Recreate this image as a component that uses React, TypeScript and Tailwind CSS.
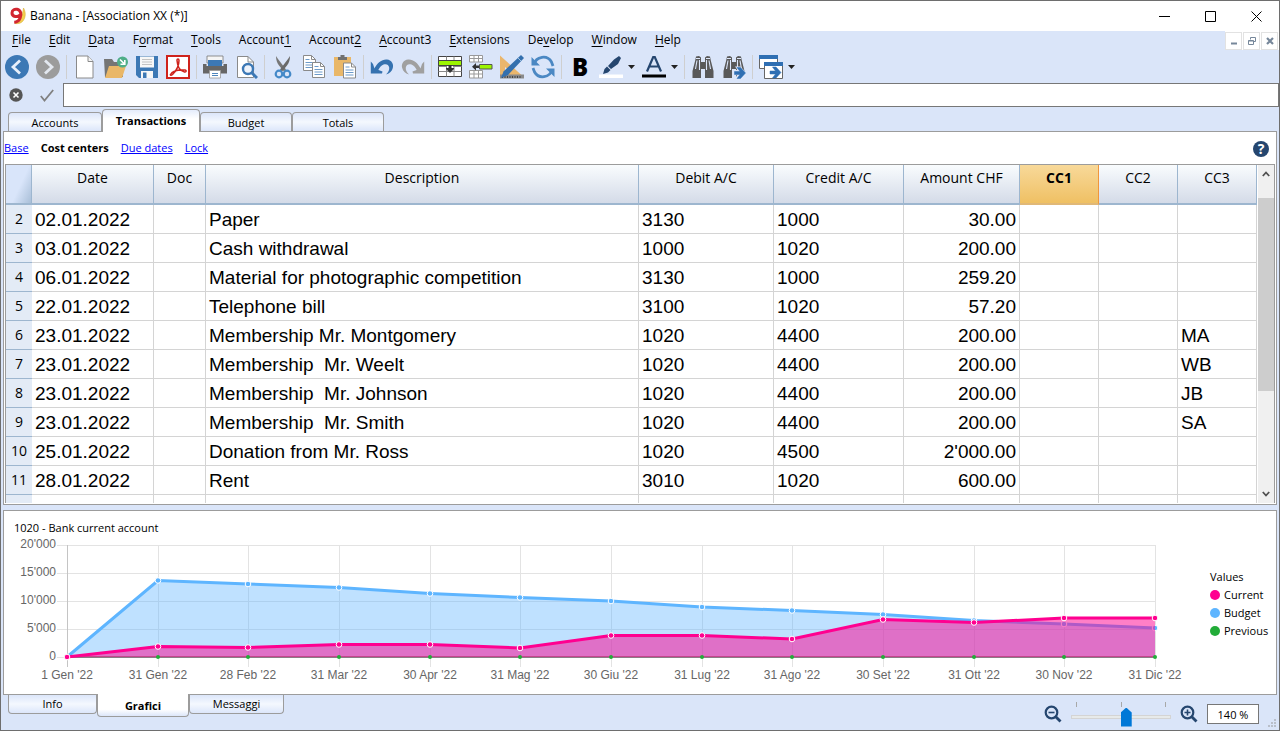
import React from "react";

type Row = { n: number; date: string; desc: string; debit: string; credit: string; amount: string; cc3?: string };

const rows: Row[] = [
  { n: 2, date: "02.01.2022", desc: "Paper", debit: "3130", credit: "1000", amount: "30.00" },
  { n: 3, date: "03.01.2022", desc: "Cash withdrawal", debit: "1000", credit: "1020", amount: "200.00" },
  { n: 4, date: "06.01.2022", desc: "Material for photographic competition", debit: "3130", credit: "1000", amount: "259.20" },
  { n: 5, date: "22.01.2022", desc: "Telephone bill", debit: "3100", credit: "1020", amount: "57.20" },
  { n: 6, date: "23.01.2022", desc: "Membership Mr. Montgomery", debit: "1020", credit: "4400", amount: "200.00", cc3: "MA" },
  { n: 7, date: "23.01.2022", desc: "Membership  Mr. Weelt", debit: "1020", credit: "4400", amount: "200.00", cc3: "WB" },
  { n: 8, date: "23.01.2022", desc: "Membership  Mr. Johnson", debit: "1020", credit: "4400", amount: "200.00", cc3: "JB" },
  { n: 9, date: "23.01.2022", desc: "Membership  Mr. Smith", debit: "1020", credit: "4400", amount: "200.00", cc3: "SA" },
  { n: 10, date: "25.01.2022", desc: "Donation from Mr. Ross", debit: "1020", credit: "4500", amount: "2'000.00" },
  { n: 11, date: "28.01.2022", desc: "Rent", debit: "3010", credit: "1020", amount: "600.00" },
];

const menus: [string, string, string][] = [
  ["", "F", "ile"], ["", "E", "dit"], ["", "D", "ata"], ["F", "o", "rmat"], ["", "T", "ools"],
  ["Account", "1", ""], ["Account", "2", ""], ["", "A", "ccount3"], ["", "E", "xtensions"],
  ["De", "v", "elop"], ["", "W", "indow"], ["", "H", "elp"],
];

function Icon({ children }: { children: React.ReactNode }) {
  return <svg viewBox="0 0 24 24" className="block size-6" aria-hidden="true">{children}</svg>;
}

function Tool({ label, children, menu }: { label: string; children: React.ReactNode; menu?: boolean }) {
  return (
    <button type="button" aria-label={label} className="flex items-center gap-[5px]">
      <Icon>{children}</Icon>
      {menu && (
        <svg viewBox="0 0 7 4" className="h-1 w-[7px]" aria-hidden="true"><path d="M0 0h7L3.500 4z" fill="#222" /></svg>
      )}
    </button>
  );
}

function Group({ children }: { children: React.ReactNode }) {
  return <div className="flex items-center gap-[7px]">{children}</div>;
}

function Sep() {
  return <div className="h-6 w-px bg-[#cfcfcf]" />;
}

const sheet = (x: number, y: number) => (
  <g transform={`translate(${x} ${y})`}>
    <path d="M0.5 0.5h8l4 4v11h-12z" fill="#fff" stroke="#8a8a8a" />
    <path d="M8.5 0.5v4h4" fill="none" stroke="#8a8a8a" />
    <path d="M2.5 4.5h4M2.5 7.5h8M2.5 10h8M2.5 12.5h8" stroke="#6c9ac9" />
  </g>
);

const binoculars = (
  <g fill="#595959">
    <path d="M5 1.500 8 1l2 1.500V7h4V2.500L16 1l3 .5.8 4L22.500 16v7h-8.500v-9h-4v9H1.500v-7L4.200 5.500z" />
    <path d="M6 5.500 4.500 14M8.500 5v10M15.500 5v10M18 5.500 19.500 14" stroke="#dce6fa" fill="none" strokeWidth="1.100" />
    <path d="M5 3.500h4M15 3.500h4" stroke="#dce6fa" fill="none" />
  </g>
);

const arrowRight = <path d="M0 4h5.500L2.500 0H6l5 5.500L6 11H2.500l3-4H0z" fill="#2f6fb3" stroke="#2f6fb3" strokeWidth="0.500" />;

function Toolbar() {
  return (
    <div className="flex h-8 shrink-0 items-center gap-1.5 pl-1 pt-0.5">
      <Group>
        <Tool label="Back"><circle cx="12" cy="12" r="12" fill="#3c78b5" /><path d="M15 5.500 8 12l7 6.500" fill="none" stroke="#e8f0fb" strokeWidth="2.800" /></Tool>
        <Tool label="Forward"><circle cx="12" cy="12" r="12" fill="#9c9c9c" /><path d="M9 5.500 16 12l-7 6.500" fill="none" stroke="#e3e8f0" strokeWidth="2.800" /></Tool>
      </Group>
      <Sep />
      <Group>
        <Tool label="New"><path d="M3.500 1h11.500l5 5.500V23H3.500z" fill="#fff" stroke="#8a8a8a" /><path d="M15 1v5.500h5" fill="#f3f3f3" stroke="#8a8a8a" /></Tool>
        <Tool label="Open">
          <path d="M0 4h8l2 3h9v15H1z" fill="#757575" /><path d="M5 11h17l-4 12H1z" fill="#e9b768" />
          <circle cx="18.500" cy="7" r="5.500" fill="#4fae88" /><path d="m16 4.500 4.500 4.500M20.800 5v4.300h-4.300" fill="none" stroke="#fff" strokeWidth="1.600" />
        </Tool>
        <Tool label="Save">
          <path d="M1 1h22v22H4l-3-3z" fill="#3c78b5" /><path d="M5 1.500h14v11H5z" fill="#f7f7f7" /><path d="M7 4.500h10M7 7h10M7 9.500h10" stroke="#c3c3c3" />
          <path d="M6 16h12v7H6z" fill="#f7f7f7" /><path d="M8 17.500h3.500V23H8z" fill="#3c78b5" />
        </Tool>
        <Tool label="PDF">
          <path d="M1 1h22v22H1z" fill="#fff" stroke="#cf231c" strokeWidth="2" />
          <path d="M4.500 19.500c2-4 7-5 14.500-4.500 1.800.3 1.500 2.200-.5 1.900C14 16 11.500 12 11 5.500c0-2.200 2-2 2 0C13 10 10 16 6.500 19.500c-1.200 1-2.600.8-2-0z" fill="none" stroke="#cf231c" strokeWidth="1.500" />
        </Tool>
      </Group>
      <Sep />
      <Group>
        <Tool label="Print">
          <path d="M4 1h16v7H4z" fill="#f5f5f5" stroke="#777" strokeWidth=".8" /><path d="M5 5h14v6H5z" fill="#3c78b5" />
          <path d="M0 9h3.500v2h17V9H24v9.500H0z" fill="#666" /><path d="M6.500 15.500h11V23h-11z" fill="#fff" stroke="#999" strokeWidth=".8" /><path d="M9 18.500h6M9 20.500h6" stroke="#4f86bd" />
        </Tool>
        <Tool label="Print preview">
          <path d="M3.500 1.500h10.500l5.500 5.500v15.500h-16z" fill="#fff" stroke="#8a8a8a" /><path d="M14 1.500V7h5.500" fill="none" stroke="#8a8a8a" />
          <circle cx="14" cy="14" r="5" fill="#eef3fb" stroke="#3c78b5" strokeWidth="2.400" /><path d="m17.500 17.500 5.500 5.500" stroke="#3c78b5" strokeWidth="3" />
        </Tool>
      </Group>
      <Sep />
      <Group>
        <Tool label="Cut">
          <path d="M5 1c0 4 1 7 3 9.500l5 6 2-2L7 4z" fill="#777" /><path d="M19 1c0 4-1 7-3 9.500l-5 6-2-2L17 4z" fill="#6a6a6a" />
          <circle cx="8" cy="19" r="3.300" fill="none" stroke="#4489c8" strokeWidth="2.200" /><circle cx="16" cy="19" r="3.300" fill="none" stroke="#4489c8" strokeWidth="2.200" />
        </Tool>
        <Tool label="Copy">{sheet(1, 0)}{sheet(10, 7)}</Tool>
        <Tool label="Paste"><path d="M1 2h17v19H1z" fill="#e9b768" /><path d="M5 5V2h2.500V0h4v2H14v3z" fill="#707070" />{sheet(10, 7.500)}</Tool>
      </Group>
      <Sep />
      <Group>
        <Tool label="Undo"><path d="M4 14C7.500 7.500 12 4 17 4.500c4.500.5 7 4.500 5.800 8.500-.8 3-3 5.500-6.800 6.500 2.500-2.500 3.500-4.500 3.200-7-.4-3-3-4-5.700-3-2.500 1-4 3-5.500 6z" fill="#3572b0" /><path d="M.8 6.500 3 9l1.500 4.500 8 3L12 18.500H.8z" fill="#3572b0" /></Tool>
        <Tool label="Redo"><path d="M20 14C16.500 7.500 12 4 7 4.500 2.500 5 0 9 1.200 13c.8 3 3 5.500 6.800 6.500-2.500-2.500-3.500-4.500-3.200-7 .4-3 3-4 5.700-3 2.500 1 4 3 5.500 6z" fill="#a0a0a0" /><path d="M23.200 6.500 21 9l-1.500 4.500-8 3 .5 2h11.200z" fill="#a0a0a0" /></Tool>
      </Group>
      <Sep />
      <Group>
        <Tool label="Insert row">
          <path d="M.5 1.500h23v20H.5z" fill="#fff" stroke="#444" /><path d="M8.500 1.500v20M16 1.500v20M.5 11.500h23M.5 16.500h23" stroke="#888" />
          <path d="M.5 5.500h23v5H.5z" fill="#9cf500" stroke="#444" /><path d="M12 11v2" stroke="#fff" strokeWidth="6" /><path d="M10.500 10h3v3h2.500v1L12 18l-4-4v-1h2.500z" fill="#333" />
        </Tool>
        <Tool label="Add row">
          <path d="M.5 .5h13v6.500H.5zM.5 15.500h13v7.500H.5zM5 .5v6.500M9.500 .5v6.500M5 15.500v7.500M9.500 15.500v7.500M.5 3.500h13M.5 19h13" fill="#fff" stroke="#999" />
          <path d="M10.500 9.500h12.500v4.500H10.500z" fill="#9cf500" stroke="#555" /><path d="M3 11.700 7 8v2.500h3v2.500H7v2.500z" fill="#333" />
        </Tool>
        <Tool label="Design">
          <path d="M0 .5v20h22z" fill="#eab66c" /><path d="M5 12v5h6z" fill="#dce6fa" /><path d="M0 19.500h24v4H0z" fill="#8a8a8a" /><path d="M2 22h20" stroke="#444" strokeDasharray="1 1.500" strokeWidth="2" />
          <path d="M21 0 24 3 8 20l-7 3 2.500-6.500z" fill="#3470ae" /><path d="m18 3 3 3" stroke="#bcd4ec" strokeWidth=".8" />
        </Tool>
        <Tool label="Refresh">
          <path d="M3 9.500A9.500 9.500 0 0 1 20.500 7l1.500 4M21 14.500A9.500 9.500 0 0 1 3.500 17L2 13" fill="none" stroke="#4b88c3" strokeWidth="2.800" /><path d="M.5 2v8.500H9zM23.500 22v-8.500H15z" fill="#4b88c3" />
        </Tool>
      </Group>
      <Sep />
      <Group>
        <button type="button" aria-label="Bold" className="flex h-6 w-6 items-center justify-center font-['Open_Sans',sans-serif] text-2xl font-extrabold leading-6 text-black">B</button>
        <Tool label="Highlight" menu>
          <path d="M15 4.500 20 1l2 2-3 6-7 5-3-3zM8 11.500l3.500 3.500-2.500 2.500L4 19l1.500-5z" fill="#25466f" /><path d="M0 19.500h24v3.500H0z" fill="#fff" />
        </Tool>
        <Tool label="Text colour" menu>
          <path d="M5 16.500 11.200 2h1.600L19 16.500M7.300 11.500h9.400" fill="none" stroke="#25466f" strokeWidth="2.200" /><path d="M0 19.500h24v3H0z" fill="#000" />
        </Tool>
      </Group>
      <Sep />
      <Group>
        <Tool label="Find">{binoculars}</Tool>
        <Tool label="Find next">{binoculars}<path d="M11 15h4.500L13 11.500h5.500l5.500 6V24H13l2-4h-4z" fill="#dce6fa" /><g transform="translate(12.500 12.500)">{arrowRight}</g></Tool>
      </Group>
      <Sep />
      <Tool label="Windows" menu>
        <path d="M.5.500h18v13H.5z" fill="#fff" stroke="#666" /><path d="M0 0h19v4H0z" fill="#2f6fb3" />
        <path d="M5.500 7.500h18v16h-18z" fill="#fff" stroke="#666" /><path d="M5 7h19v4H5z" fill="#2f6fb3" /><g transform="translate(11 12)">{arrowRight}</g>
      </Tool>
    </div>
  );
}

const th = "h-10 border-b-2 border-r border-[#9db6cf] bg-linear-to-b from-[#f9fcfe] to-[#d4dbe8] pb-3 font-normal";
const td = "h-[29px] overflow-hidden whitespace-pre border-b border-r border-[#d4d4d4] px-[3px] pb-0 pt-0.5";

function Grid() {
  return (
    <table className="w-full table-fixed border-separate border-spacing-0">
      <colgroup>
        <col className="w-[26px]" /><col className="w-[122px]" /><col className="w-[52px]" /><col />
        <col className="w-[135px]" /><col className="w-[130px]" /><col className="w-[116px]" />
        <col className="w-[79px]" /><col className="w-[79px]" /><col className="w-[79px]" />
      </colgroup>
      <thead className="font-['Open_Sans',sans-serif] text-sm">
        <tr>
          <th aria-label="Row" className="h-10 border-b-2 border-r border-[#9db6cf] bg-linear-[115deg,#d9e5fa_55%,#a9bfd8] p-0" />
          {["Date", "Doc", "Description", "Debit A/C", "Credit A/C", "Amount CHF"].map((h) => <th key={h} className={th}>{h}</th>)}
          <th className="h-10 border-b-2 border-r border-b-[#e0b878] border-r-[#f0963c] bg-linear-to-b from-[#f8d999] to-[#efc063] pb-3 font-bold">CC1</th>
          <th className={th}>CC2</th>
          <th className={th}>CC3</th>
        </tr>
      </thead>
      <tbody className="font-['Liberation_Sans',Arial,sans-serif] text-[19px] leading-[26px]">
        {rows.map((r) => (
          <tr key={r.n}>
            <th className="border-b border-[#9db6cf] bg-[#e3ebf6] p-0 text-center font-['Open_Sans',sans-serif] text-sm font-normal">{r.n}</th>
            <td className={td}>{r.date}</td>
            <td className={td} />
            <td className={td}>{r.desc}</td>
            <td className={td}>{r.debit}</td>
            <td className={td}>{r.credit}</td>
            <td className={`${td} text-right`}>{r.amount}</td>
            <td className={td} />
            <td className={td} />
            <td className={td}>{r.cc3}</td>
          </tr>
        ))}
        <tr>
          <th className="bg-[#e3ebf6] p-0" />
          {Array.from({ length: 9 }, (_, i) => <td key={i} className={td} />)}
        </tr>
      </tbody>
    </table>
  );
}

const xs = [67, 158, 248, 339, 430, 520, 611, 702, 792, 883, 974, 1064, 1155];
const budget = [656, 579.5, 583, 586.5, 592.5, 596.5, 600, 606, 609.5, 613.5, 619.5, 623, 627];
const current = [656, 645.5, 646.5, 643.5, 643.5, 647, 634.5, 634.5, 638, 618.5, 621.5, 617, 617];
const months = ["1 Gen '22", "31 Gen '22", "28 Feb '22", "31 Mar '22", "30 Apr '22", "31 Mag '22", "30 Giu '22", "31 Lug '22", "31 Ago '22", "30 Set '22", "31 Ott '22", "30 Nov '22", "31 Dic '22"];
const line = (ys: number[]) => ys.map((y, i) => `${xs[i]},${y}`).join(" ");
const area = (ys: number[]) => `${line(ys)} 1155,656 67,656`;

function Chart() {
  return (
    <svg viewBox="4 535 1206 150" className="block min-w-0 flex-1" role="img" aria-label="Bank current account">
      {[544.5, 572.5, 600.5, 628.5, 656.5].map((y) => <path key={y} d={`M57 ${y}H1155`} stroke="#e3e3e3" />)}
      {xs.map((x) => <path key={x} d={`M${x + 0.5} 544V666`} stroke={x === 67 ? "#c4c4c4" : "#e3e3e3"} />)}
      <polygon points={area(budget)} fill="#5eb5ff" fillOpacity=".4" />
      <path d="M67 656H1155" stroke="#8b8b8b" strokeWidth="2" />
      <polyline points={line(budget)} fill="none" stroke="#5eb5ff" strokeWidth="3" />
      {xs.map((x, i) => <circle key={x} cx={x} cy={budget[i]} r="2.800" fill="#5eb5ff" stroke="#fff" />)}
      <polygon points={area(current)} fill="#ff0090" fillOpacity=".5" />
      <path d="M67 656.500H1155" stroke="#8b7b86" />
      <polyline points={line(current)} fill="none" stroke="#ff0090" strokeWidth="3" />
      {xs.map((x, i) => <circle key={x} cx={x} cy={current[i]} r="2.800" fill="#ff0090" stroke="#fff" />)}
      {xs.slice(1).map((x) => <circle key={x} cx={x} cy="656" r="2" fill="#22ac38" />)}
      <g fontFamily="Liberation Sans, Arial, sans-serif" fontSize="12" fill="#666">
        {["20'000", "15'000", "10'000", "5'000", "0"].map((t, i) => <text key={t} x="56" y={547 + i * 28} textAnchor="end">{t}</text>)}
        {months.map((m, i) => <text key={m} x={xs[i]} y="678" textAnchor="middle">{m}</text>)}
      </g>
    </svg>
  );
}

const legend = [
  { name: "Current", dot: "bg-[#ff0090]" },
  { name: "Budget", dot: "bg-[#5eb5ff]" },
  { name: "Previous", dot: "bg-[#22ac38]" },
];

const topTab = "h-[19px] rounded-t border border-b-0 border-[#9c9c9c] bg-linear-to-b from-[#dce6fa] via-[#f4f8fe] to-[#dce6fa] pt-0.5 leading-4";
const bottomTab = "h-[19px] rounded-b border border-t-0 border-[#9c9c9c] bg-linear-to-t from-[#dce6fa] via-[#f4f8fe] to-[#dce6fa]";
const link = "text-[#0000ff] underline";
const mdi = "flex h-[18px] w-[17px] items-center justify-center border border-[#e2e2e2] bg-white";

function Zoom({ plus }: { plus?: boolean }) {
  return (
    <svg viewBox="0 0 18 18" className="size-[18px]" fill="none" stroke="#25466f" aria-hidden="true">
      <circle cx="7.500" cy="7.500" r="5.800" strokeWidth="2.200" /><path d="m11.500 11.500 5 5" strokeWidth="2.800" />
      <path d={plus ? "M4.500 7.500h6M7.500 4.500v6" : "M4.500 7.500h6"} strokeWidth="1.600" />
    </svg>
  );
}

export default function App() {
  return (
    <div className="flex h-screen flex-col overflow-hidden border border-[#6e6e6e] bg-[#dae5f9] font-['Open_Sans',sans-serif] text-[11px] text-black">
      <header className="flex h-[30px] shrink-0 items-center bg-white pl-2 text-xs">
        <svg viewBox="0 0 18 18" className="size-[18px]" aria-hidden="true">
          <path d="M14.500 1c2.500 4 2.500 10-1 13.500-2 2-5 2.500-7.500 2 4-1.500 7.500-7 8.500-15.500z" fill="#f2cf50" stroke="#d2a62c" strokeWidth=".5" />
          <path d="M11 8C9 10.500 3 10.200 3 6 3 2.500 6 2 8 2.300c4 .7 4.500 5 3.200 8.500-1 2.800-3 4.400-6 4.400" fill="none" stroke="#d22630" strokeWidth="3" />
        </svg>
        <span className="ml-[3px] flex-1">Banana - [Association XX (*)]</span>
        <div className="flex">
          <button type="button" aria-label="Minimize" className="flex w-[46px] justify-center"><svg viewBox="0 0 11 11" className="size-[11px]"><path d="M0 5.500h11" stroke="#000" /></svg></button>
          <button type="button" aria-label="Maximize" className="flex w-[46px] justify-center"><svg viewBox="0 0 11 11" className="size-[11px]"><path d="M.5.500h10v10H.5z" fill="none" stroke="#000" /></svg></button>
          <button type="button" aria-label="Close" className="flex w-[46px] justify-center"><svg viewBox="0 0 11 11" className="size-[11px]"><path d="m.5.500 10 10M10.500.500l-10 10" stroke="#000" /></svg></button>
        </div>
      </header>

      <nav className="flex h-[19px] shrink-0 items-center gap-[18px] pl-[11px] text-xs leading-[18px]">
        {menus.map(([a, b, c]) => (
          <button type="button" key={a + b + c} className="mb-px">{a}<span className="underline underline-offset-2">{b}</span>{c}</button>
        ))}
        <div className="ml-auto flex gap-px self-start bg-white pr-px pt-px">
          <button type="button" aria-label="Minimize document" className={mdi}><svg viewBox="0 0 8 8" className="size-2"><path d="M1 6.500h6" stroke="#76879a" strokeWidth="2" /></svg></button>
          <button type="button" aria-label="Restore document" className={mdi}><svg viewBox="0 0 8 8" className="size-2" fill="none" stroke="#76879a"><path d="M2.500 2.500v-2h5v4h-2M.5 3.500h5v4h-5zM.5 4h5" /></svg></button>
          <button type="button" aria-label="Close document" className={mdi}><svg viewBox="0 0 8 8" className="size-2"><path d="m1 1 6 6M7 1 1 7" stroke="#76879a" strokeWidth="2.200" /></svg></button>
        </div>
      </nav>

      <Toolbar />

      <div className="flex h-[26px] shrink-0 items-center">
        <button type="button" aria-label="Cancel entry" className="ml-2"><svg viewBox="0 0 14 14" className="size-3.5"><circle cx="7" cy="7" r="6.700" fill="#555" /><path d="m4.500 4.500 5 5M9.500 4.500l-5 5" stroke="#fff" strokeWidth="1.600" /></svg></button>
        <button type="button" aria-label="Confirm entry" className="ml-[17px]"><svg viewBox="0 0 14 14" className="size-3.5"><path d="m.8 8 3.700 4.500L13.200 2" fill="none" stroke="#808080" strokeWidth="1.800" /></svg></button>
        <input aria-label="Cell content" className="ml-[9px] h-6 min-w-0 flex-1 border border-[#777] bg-white px-1 outline-none" />
      </div>

      <div role="tablist" className="flex shrink-0 items-end pl-[7px] pt-px">
        <button type="button" role="tab" className={`${topTab} w-[94px]`}>Accounts</button>
        <button type="button" role="tab" aria-selected="true" className="z-10 -mb-px h-[23px] w-[98px] rounded-t border border-b-0 border-[#9c9c9c] bg-linear-to-b from-[#e4ecfb] to-white to-40% pt-px font-bold">Transactions</button>
        <button type="button" role="tab" className={`${topTab} w-[92px]`}>Budget</button>
        <button type="button" role="tab" className={`${topTab} w-[92px]`}>Totals</button>
      </div>

      <main className="mx-[2px] flex min-h-0 flex-1 flex-col border border-[#9c9c9c] bg-white pb-px">
        <div className="flex h-8 shrink-0 items-center gap-3 pt-px">
          <a href="#base" className={link}>Base</a>
          <span className="font-bold">Cost centers</span>
          <a href="#due-dates" className={link}>Due dates</a>
          <a href="#lock" className={link}>Lock</a>
          <button type="button" aria-label="Help" className="ml-auto mr-[7px] flex size-4 items-center justify-center rounded-full bg-[#25466f] text-sm font-bold leading-4 text-white">?</button>
        </div>
        <div className="mx-px flex min-h-0 flex-1 border border-b-0 border-[#9c9c9c]">
          <div className="min-w-0 flex-1 overflow-hidden"><Grid /></div>
          <div className="ml-px flex w-4 flex-col items-center bg-[#f0f0f0]">
            <button type="button" aria-label="Scroll up" className="flex h-[18px] items-center"><svg viewBox="0 0 8 6" className="h-1.5 w-2"><path d="m.8 5 3.200-3.500L7.200 5" fill="none" stroke="#505050" strokeWidth="1.800" /></svg></button>
            <div className="mt-[15px] h-[193px] w-full bg-[#cdcdcd]" />
            <button type="button" aria-label="Scroll down" className="mt-auto flex h-[18px] items-center"><svg viewBox="0 0 8 6" className="h-1.5 w-2"><path d="m.8 1 3.200 3.500L7.200 1" fill="none" stroke="#505050" strokeWidth="1.800" /></svg></button>
          </div>
        </div>
      </main>

      <section className="mx-[2px] mt-[5px] shrink-0 border border-[#9c9c9c] bg-white pb-2 pt-[9px]">
        <h2 className="pl-2.5 leading-4">1020 - Bank current account</h2>
        <div className="flex">
          <Chart />
          <div className="mr-2 mt-8 w-[58px] shrink-0">
            <p className="leading-[18px]">Values</p>
            <ul>
              {legend.map((l) => (
                <li key={l.name} className="flex items-center gap-1 leading-[18px]"><span className={`size-2.5 shrink-0 rounded-full ${l.dot}`} />{l.name}</li>
              ))}
            </ul>
          </div>
        </div>
      </section>

      <footer className="flex h-[35px] shrink-0 items-start pl-[7px]">
        <div role="tablist" className="flex items-start">
          <button type="button" role="tab" className={`${bottomTab} w-[89px]`}>Info</button>
          <button type="button" role="tab" aria-selected="true" className="z-10 -mt-px h-[23px] w-[92px] rounded-b border border-t-0 border-[#9c9c9c] bg-linear-to-b from-white from-70% to-[#dce6fa] pt-0.5 font-bold">Grafici</button>
          <button type="button" role="tab" className={`${bottomTab} w-[95px]`}>Messaggi</button>
        </div>
        <div className="ml-auto flex h-full items-center gap-[9px] pt-[3px]">
          <button type="button" aria-label="Zoom out"><Zoom /></button>
          <div className="flex w-[100px] flex-col">
            <div className="flex justify-between px-[5px]">
              <span className="h-[5px] w-px bg-[#a8a8a8]" /><span className="h-[5px] w-px bg-[#a8a8a8]" /><span className="h-[5px] w-px bg-[#a8a8a8]" />
            </div>
            <input
              type="range" min={0} max={250} defaultValue={140} aria-label="Zoom level"
              className="h-[19px] w-full appearance-none bg-transparent [&::-webkit-slider-runnable-track]:h-1 [&::-webkit-slider-runnable-track]:border [&::-webkit-slider-runnable-track]:border-[#d4d4d4] [&::-webkit-slider-runnable-track]:bg-[#e7eaea] [&::-webkit-slider-thumb]:-mt-2 [&::-webkit-slider-thumb]:h-[19px] [&::-webkit-slider-thumb]:w-[11px] [&::-webkit-slider-thumb]:appearance-none [&::-webkit-slider-thumb]:bg-[#0078d7] [&::-webkit-slider-thumb]:[clip-path:polygon(50%_0,100%_26%,100%_100%,0_100%,0_26%)]"
            />
          </div>
          <button type="button" aria-label="Zoom in"><Zoom plus /></button>
          <input aria-label="Zoom percentage" defaultValue="140 %" className="h-5 w-[52px] border border-[#777] bg-white text-center outline-none" />
          <svg viewBox="0 0 9 9" className="mb-0.5 mr-0.5 size-[9px] self-end" fill="#b9bfca" aria-hidden="true"><path d="M6 0h2v2H6zM3 3h2v2H3zM6 3h2v2H6zM0 6h2v2H0zM3 6h2v2H3zM6 6h2v2H6z" /></svg>
        </div>
      </footer>
    </div>
  );
}
